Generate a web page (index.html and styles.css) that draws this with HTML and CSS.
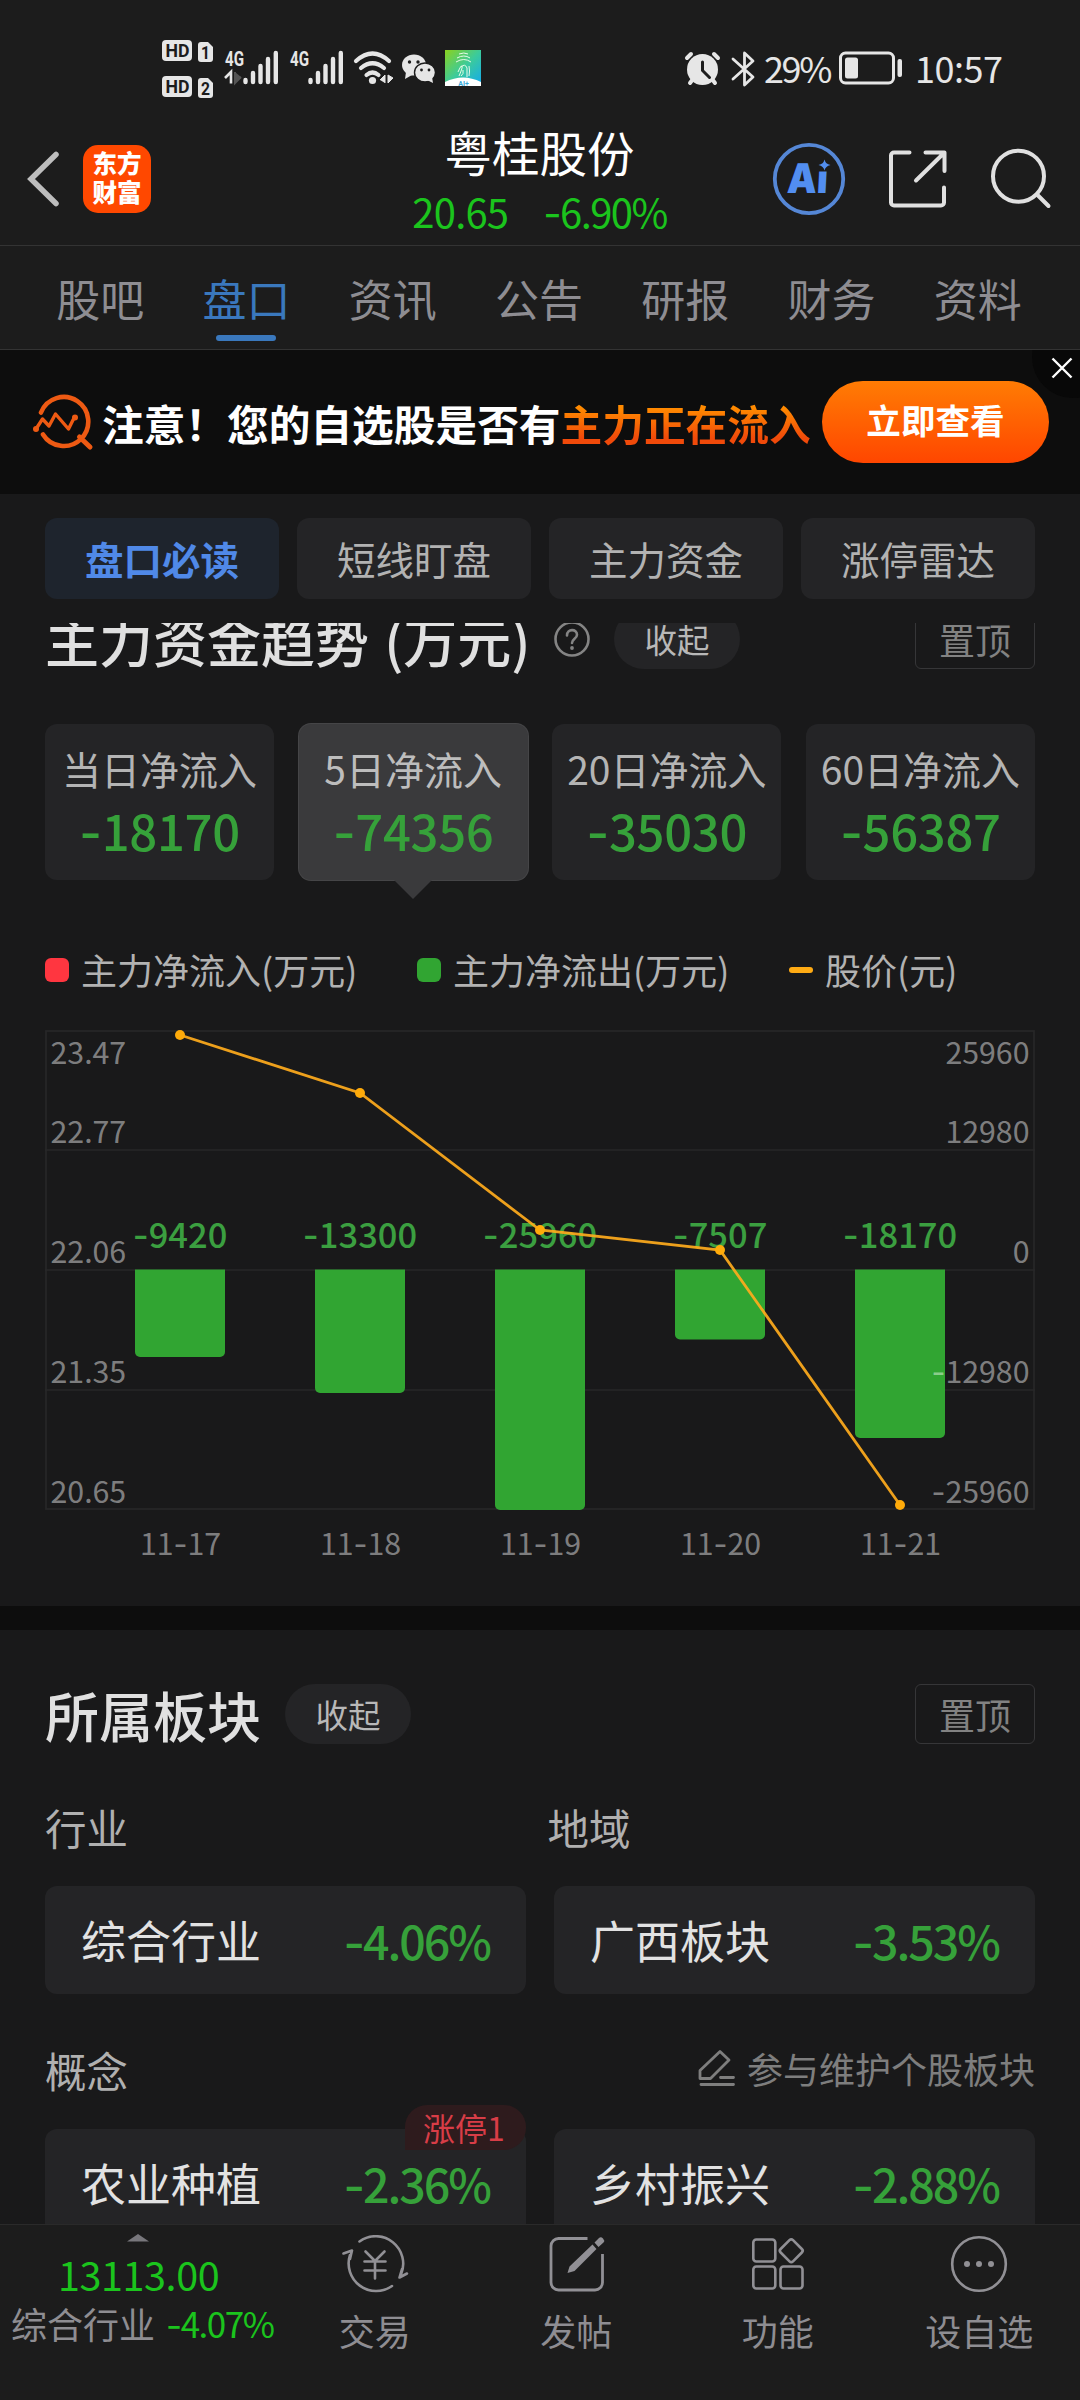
FILE: index.html
```html
<!DOCTYPE html>
<html lang="zh-CN">
<head>
<meta charset="utf-8">
<title>粤桂股份</title>
<link rel="stylesheet" href="styles.css">
</head>
<body>
<div class="page">
  <div class="status">
    <div class="status-left">
      <svg width="320" height="60" viewBox="162 38 320 60">
        <g fill="#e6e6e6">
          <rect x="162" y="40" width="30" height="21" rx="4"/>
          <rect x="162" y="76" width="30" height="21" rx="4"/>
          <path d="M201 42h7l5 5v12a3 3 0 0 1-3 3h-9a3 3 0 0 1-3-3V45a3 3 0 0 1 3-3z"/>
          <path d="M201 78h7l5 5v12a3 3 0 0 1-3 3h-9a3 3 0 0 1-3-3V81a3 3 0 0 1 3-3z"/>
        </g>
        <g class="badge-text">
          <text x="165.500" y="57" textLength="24" lengthAdjust="spacingAndGlyphs">HD</text>
          <text x="165.500" y="93" textLength="24" lengthAdjust="spacingAndGlyphs">HD</text>
          <text x="205.500" y="58.500" text-anchor="middle" textLength="9" lengthAdjust="spacingAndGlyphs">1</text>
          <text x="205.500" y="94.500" text-anchor="middle" textLength="9" lengthAdjust="spacingAndGlyphs">2</text>
        </g>
        <g class="net-text">
          <text x="225" y="65.500" textLength="19" lengthAdjust="spacingAndGlyphs">4G</text>
          <text x="290" y="65.500" textLength="19" lengthAdjust="spacingAndGlyphs">4G</text>
        </g>
        <path d="M225 78l6-6v11.500" fill="none" stroke="#e6e6e6" stroke-width="2.600"/>
        <path d="M235 72v11l6-6" fill="#555" stroke="#555" stroke-width="2"/>
        <g stroke="#e6e6e6" stroke-width="4.400" stroke-linecap="round">
          <path d="M245.500 80v2M253 73v9M260.500 66v16M268 59v23M275.800 53v29"/>
          <path d="M310.500 80v2M318 73v9M325.500 66v16M333 59v23M340.800 53v29"/>
        </g>
        <g fill="none" stroke="#e6e6e6" stroke-width="4.200" stroke-linecap="round">
          <path d="M356 61q16.500-15 33 0M361 68q11.500-9.500 23 0M366.500 75q6-5 12 0"/>
        </g>
        <circle cx="372.500" cy="80.500" r="3.600" fill="#e6e6e6"/>
        <path d="M380 80l5-5v8M388 75v8l5-5z" fill="#e6e6e6" stroke="#e6e6e6" stroke-width="1"/>
        <g fill="#e6e6e6">
          <ellipse cx="414" cy="65" rx="12" ry="10.500"/>
          <path d="M406 72l-1 7 7-4z"/>
          <ellipse cx="425" cy="72.500" rx="10.500" ry="9.500" stroke="#1c1c1c" stroke-width="1.400"/>
          <path d="M427 80l6 3-1-6z"/>
        </g>
        <g fill="#1c1c1c"><circle cx="409.500" cy="62" r="1.700"/><circle cx="418" cy="62" r="1.700"/><circle cx="421.500" cy="70" r="1.400"/><circle cx="429" cy="70" r="1.400"/></g>
        <defs><linearGradient id="appFill" x1="0" y1="0" x2="1" y2="1"><stop offset="0" stop-color="#8bd21e"/><stop offset=".5" stop-color="#3ccb9a"/><stop offset="1" stop-color="#12a9f0"/></linearGradient></defs>
        <rect x="445" y="50" width="36" height="36" fill="url(#appFill)"/>
        <path d="M445 86v-4q18-9 36 0v4z" fill="#fff"/>
        <g fill="none" stroke="#e6fbe9" stroke-width="1"><path d="M459 54q5-2 9 0M457 58q7-4 13 0M456 62q8-5 15 0M458 72q3-7 4-6t-3 10M461 67q4-4 6 1v9M463 70q1 4-2 6M469 66q1 5 0 10"/></g>
        <text x="463.500" y="85.500" text-anchor="middle" class="app-text">AI+</text>
      </svg>
    </div>
    <div class="status-right">
      <svg width="72" height="40" viewBox="684 48 72 40">
        <circle cx="702.500" cy="69.500" r="15.500" fill="#e6e6e6"/>
        <path d="M687 58l4-4M718 58l-4-4M690 83l3-4M715 83l-3-4" stroke="#e6e6e6" stroke-width="4" stroke-linecap="round"/>
        <path d="M702.500 62v8.500l7 7" fill="none" stroke="#1c1c1c" stroke-width="3" stroke-linecap="round"/>
        <path d="M733 59l20 18-8.500 8V53l8.500 8-20 18" fill="none" stroke="#e6e6e6" stroke-width="2.800" stroke-linejoin="round" stroke-linecap="round"/>
      </svg>
      <span class="battery-text">29%</span>
      <svg class="battery" width="64" height="34" viewBox="839 51.500 64 34">
        <rect x="840.500" y="53.500" width="53" height="30" rx="5" fill="none" stroke="#e6e6e6" stroke-width="3"/>
        <rect x="845" y="58" width="13" height="21" rx="2.500" fill="#e6e6e6"/>
        <rect x="897.500" y="59.500" width="4.500" height="18" rx="2" fill="#e6e6e6"/>
      </svg>
      <span class="clock">10:57</span>
    </div>
  </div>

  <header class="header">
    <div class="header-left">
      <svg width="32" height="58" viewBox="27 150 32 58"><path d="M56 154.500L31 179l25 24.500" fill="none" stroke="#bdbdbd" stroke-width="5.500" stroke-linecap="round"/></svg>
      <div class="logo"><span>东方</span><span>财富</span></div>
    </div>
    <div class="header-title">
      <h1>粤桂股份</h1>
      <div class="quote"><span>20.65</span><span class="change"><i class="dash">-</i>6.90%</span></div>
    </div>
    <div class="header-right">
      <svg width="74" height="74" viewBox="771.500 141.500 74 74">
        <circle cx="808.500" cy="178.500" r="34.200" fill="none" stroke="#5587d6" stroke-width="3.800"/>
        <g transform="translate(786 192) skewX(-3)"><text class="ai-text" textLength="41" lengthAdjust="spacingAndGlyphs">Ai</text></g>
        <rect x="816" y="158" width="15" height="13" fill="#1c1c1c"/>
        <path d="M824 159q1 4.500 6 5.500-5 1-6 5.500-1-4.500-6-5.500 5-1 6-5.500z" fill="#528ef0"/>
      </svg>
      <svg width="60" height="60" viewBox="887 148.500 60 60"><g fill="none" stroke="#e0e0e0" stroke-width="4" stroke-linecap="round" stroke-linejoin="round"><path d="M908.500 152H893a3 3 0 0 0-3 3v47a3 3 0 0 0 3 3h47a3 3 0 0 0 3-3v-15"/><path d="M924.500 152H943.500V170.500M942.500 153L915 180"/></g></svg>
      <svg width="62" height="62" viewBox="990 147.500 62 62"><g fill="none" stroke="#e0e0e0" stroke-width="4" stroke-linecap="round"><circle cx="1018.500" cy="175.700" r="25.500"/><path d="M1037 194l11.500 11.500"/></g></svg>
    </div>
  </header>

  <nav class="tabs">
    <span>股吧</span><span class="on">盘口</span><span>资讯</span><span>公告</span><span>研报</span><span>财务</span><span>资料</span>
  </nav>

  <div class="banner">
    <svg width="62" height="58" viewBox="32 393 62 58"><g fill="none" stroke="#ee5a13" stroke-width="4.600" stroke-linecap="round" stroke-linejoin="round"><path d="M41 412.500A24.500 24.500 0 1 1 43 434.500"/><path d="M79.500 437l10.500 10" stroke-width="5"/><path d="M36 429l6.500-10 6.500 7 6.500-12 13 15 6-12" stroke-width="3.400"/></g><g fill="#ee5a13"><circle cx="36" cy="429" r="3"/><circle cx="75" cy="417.500" r="3"/></g></svg>
    <p>注意！您的自选股是否有<em>主力正在流入</em></p>
    <div class="cta">立即查看</div>
    <div class="close"><svg width="22" height="22" viewBox="0 0 22 22"><path d="M1.500 1.500l19 19M20.500 1.500l-19 19" stroke="#fff" stroke-width="2.400"/></svg></div>
  </div>

  <main class="content">
    <div class="chips"><span class="on">盘口必读</span><span>短线盯盘</span><span>主力资金</span><span>涨停雷达</span></div>

    <div class="scroll">
      <section class="trend">
        <div class="head">
          <h2 class="trend-title">主力资金趋势 (万元)</h2>
          <svg width="36" height="36" viewBox="0 0 36 36"><circle cx="18" cy="18" r="16.500" fill="none" stroke="#848484" stroke-width="2.600"/><path d="M13 14.500c0-7 10-7 10-.7 0 4-5 4-5 8.200" fill="none" stroke="#848484" stroke-width="2.600" stroke-linecap="round"/><circle cx="18" cy="27" r="1.900" fill="#848484"/></svg>
          <span class="pill">收起</span>
          <span class="pin">置顶</span>
        </div>
        <div class="flows">
          <div class="flow"><span>当日净流入</span><b><i class="dash">-</i>18170</b></div>
          <div class="flow on"><span>5日净流入</span><b><i class="dash">-</i>74356</b></div>
          <div class="flow"><span>20日净流入</span><b><i class="dash">-</i>35030</b></div>
          <div class="flow"><span>60日净流入</span><b><i class="dash">-</i>56387</b></div>
        </div>
        <div class="legend">
          <span><i class="key in"></i>主力净流入(万元)</span>
          <span><i class="key out"></i>主力净流出(万元)</span>
          <span><i class="key price"></i>股价(元)</span>
        </div>
        <svg class="chart" width="990" height="540" viewBox="45 1027 990 540">
          <g fill="none" stroke="#272728" stroke-width="1.700"><rect x="46" y="1031" width="988" height="478"/><path d="M45 1150h990M45 1270h990M45 1390h990"/></g>
          <g class="values" text-anchor="middle">
            <text x="180" y="1248"><tspan class="dash">-</tspan>9420</text>
            <text x="360" y="1248"><tspan class="dash">-</tspan>13300</text>
            <text x="540" y="1248"><tspan class="dash">-</tspan>25960</text>
            <text x="720" y="1248"><tspan class="dash">-</tspan>7507</text>
            <text x="900" y="1248"><tspan class="dash">-</tspan>18170</text>
          </g>
          <g fill="#31a532">
            <path d="M135 1269.500h90v82.500a5 5 0 0 1-5 5h-80a5 5 0 0 1-5-5z"/>
            <path d="M315 1269.500h90v118.500a5 5 0 0 1-5 5h-80a5 5 0 0 1-5-5z"/>
            <path d="M495 1269.500h90v235.500a5 5 0 0 1-5 5h-80a5 5 0 0 1-5-5z"/>
            <path d="M675 1269.500h90v65a5 5 0 0 1-5 5h-80a5 5 0 0 1-5-5z"/>
            <path d="M855 1269.500h90v163.500a5 5 0 0 1-5 5h-80a5 5 0 0 1-5-5z"/>
          </g>
          <path d="M180 1035L360 1093 540 1230 720 1250 900 1505" fill="none" stroke="#ffab1c" stroke-opacity=".92" stroke-width="2.800"/>
          <g fill="#ffab0a"><circle cx="180" cy="1035" r="5"/><circle cx="360" cy="1093" r="5"/><circle cx="540" cy="1230" r="5"/><circle cx="720" cy="1250" r="5"/><circle cx="900" cy="1505" r="5"/></g>
          <g class="axis">
            <text x="50.500" y="1063.500">23.47</text><text x="50.500" y="1143">22.77</text><text x="50.500" y="1263">22.06</text><text x="50.500" y="1383">21.35</text><text x="50.500" y="1503">20.65</text>
          </g>
          <g class="axis" text-anchor="end">
            <text x="1029.500" y="1063.500">25960</text><text x="1029.500" y="1143">12980</text><text x="1029.500" y="1263">0</text><text x="1029.500" y="1383"><tspan class="dash">-</tspan>12980</text><text x="1029.500" y="1503"><tspan class="dash">-</tspan>25960</text>
          </g>
          <g class="axis" text-anchor="middle">
            <text x="180.500" y="1555">11<tspan class="dash">-</tspan>17</text><text x="360.500" y="1555">11<tspan class="dash">-</tspan>18</text><text x="540.500" y="1555">11<tspan class="dash">-</tspan>19</text><text x="720.500" y="1555">11<tspan class="dash">-</tspan>20</text><text x="900.500" y="1555">11<tspan class="dash">-</tspan>21</text>
          </g>
        </svg>
      </section>

      <section class="boards">
        <div class="head">
          <h2>所属板块</h2>
          <span class="pill">收起</span>
          <span class="pin">置顶</span>
        </div>
        <div class="labels pair"><span>行业</span><span>地域</span></div>
        <div class="pair">
          <div class="board"><span>综合行业</span><b><i class="dash">-</i>4.06%</b></div>
          <div class="board"><span>广西板块</span><b><i class="dash">-</i>3.53%</b></div>
        </div>
        <div class="labels concept">
          <span>概念</span>
          <span class="maintain"><svg width="37" height="38" viewBox="698.500 2047 37 38"><g fill="none" stroke="#7e7e7e" stroke-width="2.800" stroke-linejoin="round" stroke-linecap="round"><path d="M700.500 2068.500l20-19 9 8.500-18.500 18.500h-10.500z"/><path d="M721 2075.500h13M701.500 2082.500h32.500"/></g></svg>参与维护个股板块</span>
        </div>
        <div class="pair">
          <div class="board"><span>农业种植</span><b><i class="dash">-</i>2.36%</b><em class="tag">涨停1</em></div>
          <div class="board"><span>乡村振兴</span><b><i class="dash">-</i>2.88%</b></div>
        </div>
      </section>
    </div>
  </main>

  <footer class="bottom">
    <div class="index">
      <svg width="22" height="8" viewBox="0 0 22 8"><path d="M0 7.500L11 0l11 7.500z" fill="#78777c"/></svg>
      <strong>13113.00</strong>
      <div><span>综合行业</span><b><i class="dash">-</i>4.07%</b></div>
    </div>
    <div class="action">
      <svg width="68" height="58" viewBox="341.500 2235 68 58"><g fill="none" stroke="#919095" stroke-width="2.600" stroke-linecap="round" stroke-linejoin="round"><path d="M360 2241.500A27.500 27.500 0 0 1 401.500 2274.500M402.500 2269l-2.500 8.500 7.500-4M392.500 2286A27.500 27.500 0 0 1 350.500 2255M344 2253.500l8.500-3-2 8.500"/><path d="M366 2251.500l9.500 9.500 9.500-9.500M375.500 2261v17.500M365 2261.500h21M365 2270.500h21"/></g></svg>
      <span>交易</span>
    </div>
    <div class="action">
      <svg width="58" height="58" viewBox="547.500 2235 58 58"><path d="M588 2238.500H559a7.500 7.500 0 0 0-7.500 7.500v36.500a7.500 7.500 0 0 0 7.500 7.500h36.500a7.500 7.500 0 0 0 7.500-7.500V2254" fill="none" stroke="#919095" stroke-width="2.800"/><path d="M568 2273l2-6.500 23-22 4 4.500-22 22zM595 2242.500l4.500-4.500q2-1.500 4 .5t.5 4l-5 4.500z" fill="#919095"/></svg>
      <span>发帖</span>
    </div>
    <div class="action">
      <svg width="58" height="58" viewBox="749.500 2235 58 58"><g fill="none" stroke="#919095" stroke-width="2.600"><rect x="753.800" y="2239.500" width="22" height="22" rx="3"/><rect x="753.800" y="2266.500" width="22" height="22" rx="3"/><rect x="781" y="2266.500" width="22" height="22" rx="3"/><rect x="783" y="2242" width="17.500" height="17.500" rx="2.500" transform="rotate(45 791.750 2250.750)"/></g></svg>
      <span>功能</span>
    </div>
    <div class="action">
      <svg width="58" height="58" viewBox="950 2235 58 58"><circle cx="979" cy="2264" r="26.800" fill="none" stroke="#919095" stroke-width="2.600"/><g fill="#919095"><circle cx="967" cy="2264" r="3"/><circle cx="979" cy="2264" r="3"/><circle cx="991" cy="2264" r="3"/></g></svg>
      <span>设自选</span>
    </div>
  </footer>
</div>
</body>
</html>
```
FILE: styles.css
```css
* { box-sizing: border-box; margin: 0; padding: 0; }
body { background: #1c1c1c; font-family: "Noto Sans CJK SC", sans-serif; color: #e0e0e0; }
svg { display: block; flex: none; }
i, em { font-style: normal; }
.dash { font-family: Inter, sans-serif; }

.page { width: 1080px; height: 2400px; display: flex; flex-direction: column; overflow: hidden; }
.page > * { flex: none; }

/* status bar */
.status { height: 98px; padding: 38px 76px 0 162px; display: flex; justify-content: space-between; color: #e6e6e6; }
.status-right { display: flex; align-items: center; height: 60px; font-size: 36px; line-height: 60px; }
.battery-text { width: 67px; margin-left: 8px; letter-spacing: -2.400px; white-space: nowrap; padding-bottom: 2px; }
.battery { margin-left: 8px; }
.clock { width: 89px; margin-left: 12px; letter-spacing: -.5px; white-space: nowrap; padding-bottom: 2px; }
.badge-text { font: 700 19px Roboto, sans-serif; fill: #1c1c1c; }
.net-text { font: 700 21px Roboto, sans-serif; fill: #e6e6e6; }
.app-text { font: 700 7px Roboto, sans-serif; fill: #3aa8d8; }

/* header */
.header { height: 147px; padding: 0 28px 0 27px; display: grid; grid-template-columns: 1fr auto 1fr; }
.header-left { display: flex; align-items: center; gap: 24px; padding-top: 14px; }
.logo { width: 68px; height: 68px; border-radius: 15px; background: #ff4800; color: #fff; display: flex; flex-direction: column; align-items: center; justify-content: center; font-size: 24.500px; font-weight: 900; line-height: 29px; padding-bottom: 3px; }
.header-title { padding-top: 24px; text-align: center; }
.header-title h1 { font-size: 47.500px; font-weight: 400; line-height: 59px; color: #fff; }
.quote { display: flex; justify-content: center; gap: 35px; font-size: 40px; line-height: 60px; letter-spacing: -.8px; color: #1bc41d; }
.change { letter-spacing: -1.600px; }
.header-right { display: flex; align-items: center; justify-content: flex-end; gap: 42px; padding-top: 14px; }
.ai-text { font: 900 41px Inter, sans-serif; fill: #528ef0; }

/* tabs */
.tabs { height: 105px; border-top: 1px solid #333; border-bottom: 1px solid #333; padding: 0 29px 0 27px; display: grid; grid-template-columns: repeat(7, 1fr); text-align: center; font-size: 44px; line-height: 104px; color: #8e8d92; }
.tabs .on { color: #3a78bd; display: flex; flex-direction: column; align-items: center; }
.tabs .on::after { content: ""; width: 60px; height: 6px; border-radius: 3px; background: #3a78bd; margin-top: -15px; }

/* banner */
.banner { position: relative; height: 144px; background: #0d0d0d; display: flex; padding-left: 32px; overflow: hidden; }
.banner > svg { margin-top: 43px; }
.banner p { margin-left: 8px; width: 720px; font-size: 41.700px; font-weight: 700; line-height: 60px; padding-top: 43px; color: #fff; white-space: nowrap; }
.banner em { background: linear-gradient(#ff8a00 25%, #f04a0a 75%); -webkit-background-clip: text; background-clip: text; color: transparent; }
.cta { width: 227px; height: 82px; margin-top: 31px; border-radius: 41px; background: linear-gradient(#ff7c04, #ff4600); color: #fff; font-size: 34.600px; font-weight: 700; line-height: 77px; text-align: center; }
.close { position: absolute; right: -34px; top: -34px; width: 82px; height: 82px; border-radius: 50%; background: #080808; padding: 41px 0 0 19px; }

/* chips */
.content { height: 1730px; background: #19191a; }
.chips { height: 129px; padding: 24px 45px; display: grid; grid-template-columns: repeat(4, 1fr); column-gap: 18px; }
.chips span { height: 81px; border-radius: 12px; background: #242426; color: #b2b2b2; font-size: 38.500px; line-height: 81px; text-align: center; }
.chips .on { background: #1e242d; color: #5089e8; font-weight: 700; }
.scroll { height: 1601px; overflow: hidden; }
.trend { margin-top: -14px; padding: 0 45px 39px; border-bottom: 24px solid #0d0d0d; }
.boards { padding: 54px 45px 0; }

.head { height: 60px; display: flex; align-items: center; gap: 24px; }
.head h2 { font-size: 54px; font-weight: 500; line-height: 62px; padding-top: 2px; white-space: nowrap; color: #e0e0e0; }
.head .trend-title { width: 485px; word-spacing: 3px; }
.pill { width: 126px; height: 60px; border-radius: 30px; background: #242426; color: #b8b8b8; font-size: 32.500px; line-height: 60px; text-align: center; }
.pin { width: 120px; height: 60px; margin-left: auto; border: 1px solid #363638; border-radius: 6px; color: #828282; font-size: 36px; line-height: 58px; text-align: center; }

/* net flow cards */
.flows { margin-top: 55px; display: grid; grid-template-columns: repeat(4, 1fr); gap: 24.600px; }
.flow { position: relative; height: 156px; border-radius: 12px; background: #242426; text-align: center; padding-top: 14px; white-space: nowrap; }
.flow span { display: block; font-size: 39px; line-height: 60px; color: #b4b4b4; }
.flow b { display: block; font-size: 49px; line-height: 64px; font-weight: 500; letter-spacing: -.3px; color: #36a13a; }
.flow.on { background: #3a3a3c; box-shadow: 0 0 0 1px #454547; }
.flow.on::after { content: ""; position: absolute; left: 50%; top: 156px; margin-left: -19px; border: 19px solid transparent; border-top-color: #3a3a3c; border-bottom: 0; }
.flow.on span { color: #bdbdbd; }

.legend { margin-top: 69px; display: flex; font-size: 36px; line-height: 40px; color: #b2b2b2; }
.legend span { display: flex; align-items: center; flex: none; width: 372px; white-space: nowrap; }
.legend span:last-child { width: auto; }
.key { width: 24px; height: 24px; border-radius: 6px; margin: 2px 12px 0 0; }
.in { background: #ff3640; }
.out { background: #31a532; }
.price { height: 6px; border-radius: 3px; background: #ffab14; }
.chart { margin-top: 38px; }
.axis { font-size: 30.300px; fill: #fff; fill-opacity: .46; }
.values { font-size: 34.500px; font-weight: 500; fill: #3b9f40; }

/* boards */
.labels { margin: 58px 0 34px; font-size: 41.500px; line-height: 50px; color: #b0b0b0; }
.pair { display: grid; grid-template-columns: 1fr 1fr; column-gap: 28px; }
.labels.pair { column-gap: 15px; }
.concept { margin-top: 51px; display: flex; justify-content: space-between; }
.maintain { display: flex; align-items: center; gap: 12px; font-size: 36px; line-height: 46px; height: 46px; color: #7e7e7e; }
.board { position: relative; height: 108px; border-radius: 12px; background: #242426; padding: 0 36px; display: flex; justify-content: space-between; font-size: 45px; line-height: 108px; color: #e2e2e2; }
.board b { font-size: 46.500px; font-weight: 500; letter-spacing: -2px; color: #36a13a; }
.tag { position: absolute; right: 0; top: -24px; width: 121px; height: 45px; border-radius: 22px 22px 22px 0; background: #2e1b1d; color: #d93d47; font-size: 32px; line-height: 45px; text-align: center; padding-right: 3px; }

/* bottom bar */
.bottom { height: 176px; background: #1c1c1c; border-top: 1px solid #2a2a2a; display: grid; grid-template-columns: 274px repeat(4, 1fr); }
.index { padding: 9px 0 0 11px; white-space: nowrap; line-height: 44px; color: #1bc41d; }
.index svg { margin-left: 116px; }
.index strong { display: block; margin: 10px 0 5px 47px; font-size: 39.500px; font-weight: 400; letter-spacing: -.4px; }
.index div { display: flex; gap: 11px; font-size: 36px; color: #8e8d92; }
.index b { font-size: 35px; font-weight: 400; letter-spacing: -1.500px; color: #1bc41d; }
.action { padding-top: 10px; display: flex; flex-direction: column; align-items: center; font-size: 36px; line-height: 44px; color: #8e8d92; }
.action span { margin-top: 15px; }
```
